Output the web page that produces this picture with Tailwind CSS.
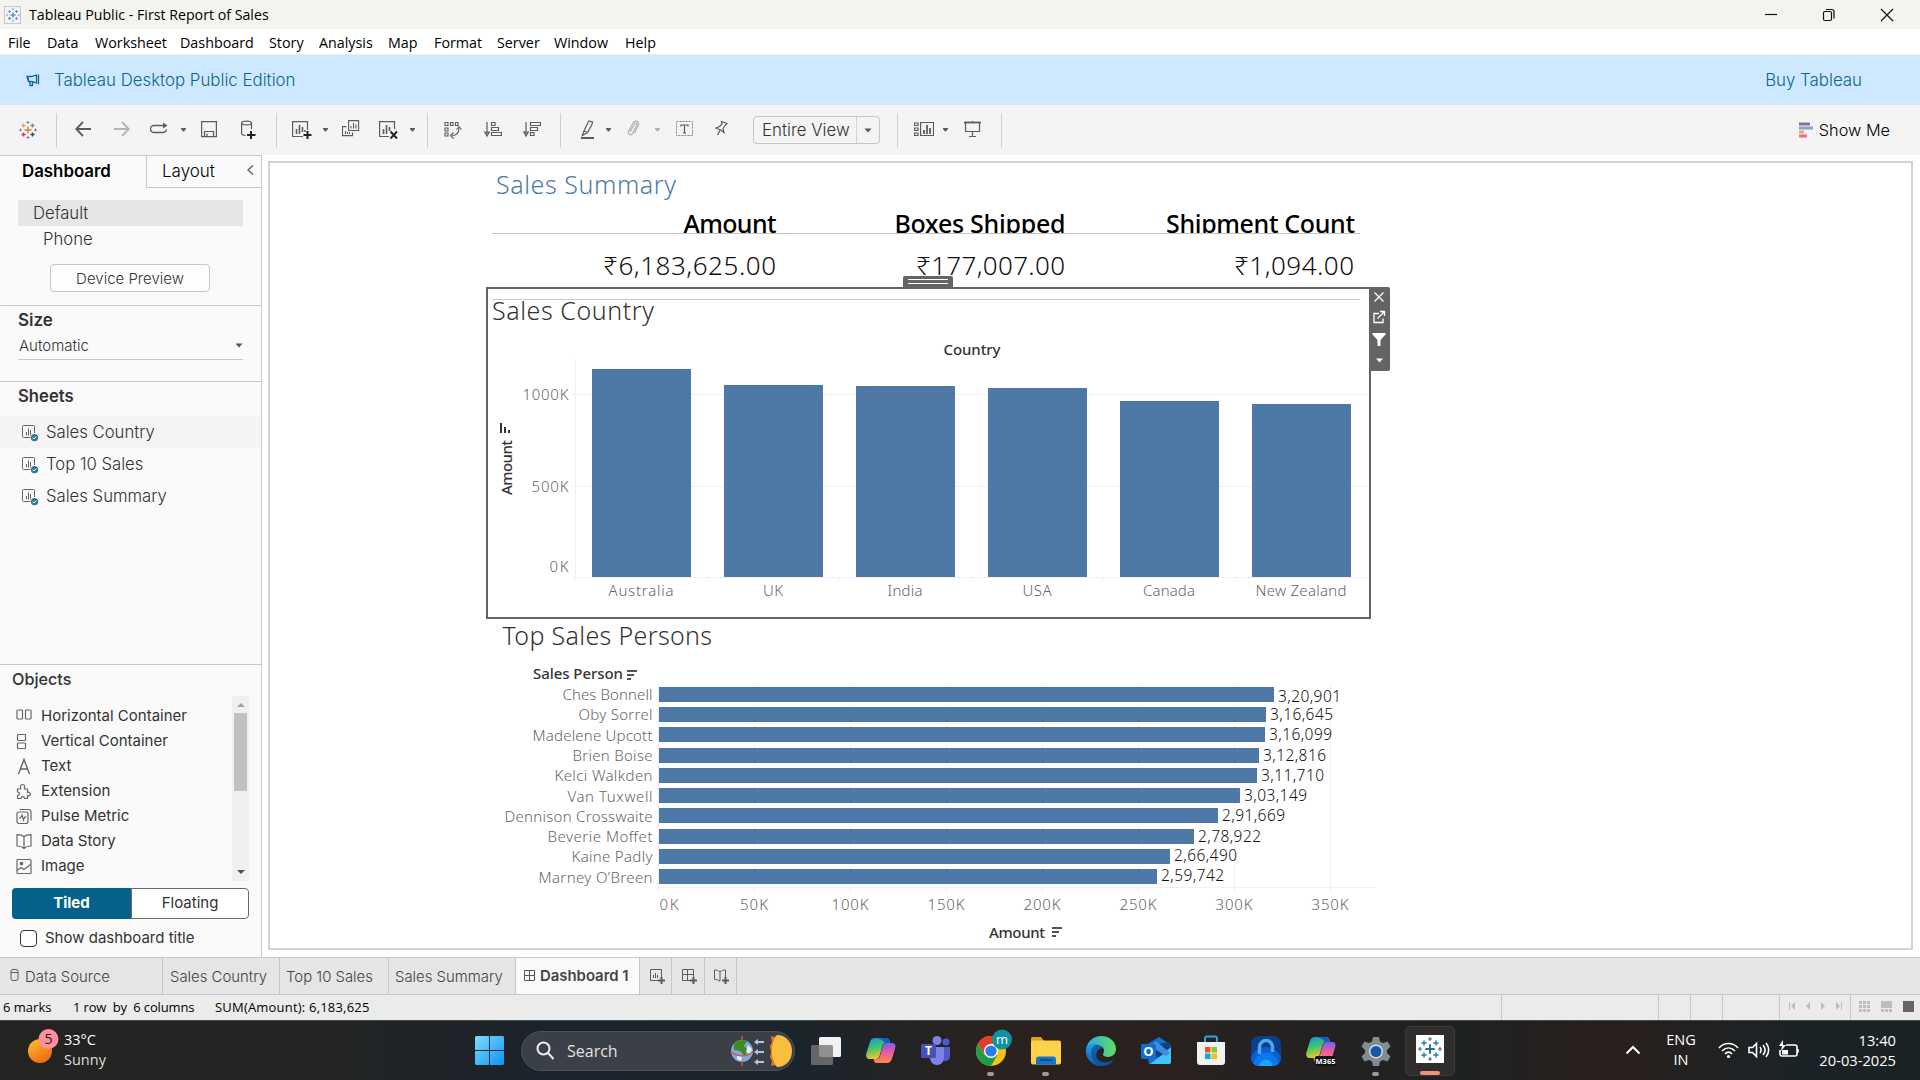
<!DOCTYPE html>
<html lang="en">
<head>
<meta charset="utf-8">
<title>Tableau Public - First Report of Sales</title>
<script src="https://cdn.jsdelivr.net/npm/@tailwindcss/browser@4"></script>
</head>
<body class="w-[1920px] h-[1080px] overflow-hidden flex flex-col bg-white font-['Inter',sans-serif] text-[#333]">

<svg class="hidden">
  <defs>
    <symbol id="caret" viewBox="0 0 7 20"><path d="M1 8h5v1l-2 2.500h-1l-2-2.500z" fill="currentColor"/></symbol>
    <symbol id="sheet" viewBox="0 0 17 17"><g fill="none" stroke="#666"><path d="M8.500 12.500H1.500a1 1 0 0 1-1-1v-10a1 1 0 0 1 1-1h10a1 1 0 0 1 1 1V8"/><path d="M4.500 7v3.500M6.500 3.500v7M8.500 5v5.500"/></g><circle cx="12.500" cy="12.700" r="3.600" fill="#2e7a9c"/><path d="m10.700 12.800 1.300 1.200 2.200-2.400" fill="none" stroke="#fff"/></symbol>
    <symbol id="flower" viewBox="0 0 18 18"><path d="M9 5.500v7M5.500 9h7" stroke-width="1.400" stroke="var(--c1)"/><path d="M4.500 2.500v4M2.500 4.500h4" stroke="var(--c2)"/><path d="M13.500 2.500v4M11.500 4.500h4" stroke="var(--c3)"/><path d="M4.500 11.500v4M2.500 13.500h4" stroke="var(--c4)"/><path d="M13.500 11.500v4M11.500 13.500h4" stroke="var(--c5)"/><path d="M9 0v3M7.500 1.500h3M9 15v3M7.500 16.500h3M1.500 7.500v3M0 9h3M16.500 7.500v3M15 9h3" stroke="var(--c6)" stroke-width=".9"/></symbol>
  </defs>
</svg>

<header class="h-[29px] flex items-center bg-[#f3f3ef] font-['Open_Sans',sans-serif] text-[14.200px] text-black">
  <div class="ml-1 w-[17px] h-[18px] bg-[#f0f4f7] border border-[#c8c8c8] flex items-center justify-center"><svg class="size-[14px] [--c1:#3b7ea8] [--c2:#6aa3c5] [--c3:#5794ba] [--c4:#5794ba] [--c5:#6aa3c5] [--c6:#7fb0cc]" stroke-width="1.300"><use href="#flower"/></svg></div>
  <span class="ml-2 leading-[29px]">Tableau Public - First Report of Sales</span>
  <svg class="ml-auto mr-[26px]" width="130" height="14" viewBox="0 0 130 14" fill="none" stroke="#111" stroke-width="1.200"><path d="M1 6.500h12"/><rect x="59.500" y="3.500" width="8" height="9" rx="1.500"/><path d="M62 1.500h6a2 2 0 0 1 2 2v7"/><path d="m117 1 12 12M129 1l-12 12"/></svg>
</header>

<nav class="h-[26px] shrink-0 flex items-center bg-white border-b border-[#ececec] font-['Open_Sans',sans-serif] text-[14.300px] leading-[26px] text-black pl-2 pt-0.5 whitespace-nowrap">
  <span class="w-[39px]">File</span><span class="w-12">Data</span><span class="w-[85px]">Worksheet</span><span class="w-[89px]">Dashboard</span><span class="w-[50px]">Story</span><span class="w-[69px]">Analysis</span><span class="w-[46px]">Map</span><span class="w-[63px]">Format</span><span class="w-[57px]">Server</span><span class="w-[71px]">Window</span><span>Help</span>
</nav>

<section class="h-[50px] shrink-0 flex items-center bg-[#cee8ff] text-[16.850px] font-light text-[#0b6792]">
  <svg class="ml-[26px]" width="14" height="14" viewBox="0 0 14 14" fill="none" stroke="currentColor" stroke-width="1.300"><path d="M1 3.500h4.500l5-1.500v8l-5-1.500h-3zM1 3.500l1.500 2.500-.5 2.500M4 9v3.500h2.500V9M12.500 1.500v9.500"/></svg>
  <span class="ml-[14px] pt-0.5">Tableau Desktop Public Edition</span>
  <span class="ml-auto mr-[58px] pt-0.5">Buy Tableau</span>
</section>

<section class="h-[50px] shrink-0 flex items-center bg-[#f4f4f4] text-[#5c5c5c]">
  <svg class="ml-[19px] size-[18px] [--c1:#e8762c] [--c2:#f0a04b] [--c3:#6c8fa8] [--c4:#c8344a] [--c5:#1f447e] [--c6:#5f7fa5]" stroke-width="1.300"><use href="#flower"/></svg>
  <div class="ml-[19px] w-px h-[35px] bg-[#cfcfcf]"></div>
  <svg class="ml-[18px]" width="16" height="20" viewBox="0 0 16 20" fill="none" stroke="currentColor" stroke-width="1.800"><path d="M16 9H1.500M8 2 1.200 9 8 16"/></svg>
  <svg class="ml-[23px]" width="16" height="20" viewBox="0 0 16 20" fill="none" stroke="#b4b4b4" stroke-width="1.800"><path d="M0 9h14.500M8 2l6.800 7L8 16"/></svg>
  <svg class="ml-5" width="18" height="20" viewBox="0 0 18 20" fill="none" stroke="currentColor" stroke-width="1.300"><path d="M4 5.500h11.500M4 5.500a3.500 3.500 0 0 0 0 7h9a3.500 3.500 0 0 0 3.500-3"/><path d="m13 2.500 4.500 3-4.500 3z" fill="currentColor" stroke="none"/></svg>
  <svg class="ml-3" width="7" height="20"><use href="#caret"/></svg>
  <svg class="ml-[14px]" width="16" height="20" viewBox="0 0 16 20" fill="none" stroke="currentColor" stroke-width="1.200"><path d="M.6 1.600h14.800v15H.6zM3.500 16.500v-5h9v5M6 13.500v3"/></svg>
  <svg class="ml-6" width="15" height="20" viewBox="0 0 15 20" fill="none" stroke="currentColor" stroke-width="1.200"><path d="M.6 3v10.500c0 1 1.500 1.700 4 2M10.500 3v6"/><ellipse cx="5.500" cy="3" rx="5" ry="1.900"/><path d="M10 11v8M6 15h8.500" stroke="#222" stroke-width="2"/></svg>
  <div class="ml-5 w-px h-[35px] bg-[#cfcfcf]"></div>
  <svg class="ml-[15px]" width="20" height="20" viewBox="0 0 20 20" fill="none" stroke="currentColor" stroke-width="1.200"><path d="M11 16.500H.6V1.600h14.900V10"/><path d="M4.500 9v5M7.500 5v9M10.500 7v5M13 10v2" stroke-width="1.600"/><path d="M15.500 11v8M11.500 15h8" stroke="#222" stroke-width="2"/></svg>
  <svg class="ml-[10px]" width="7" height="20"><use href="#caret"/></svg>
  <svg class="ml-[13px]" width="18" height="20" viewBox="0 0 18 20" fill="none" stroke="currentColor" stroke-width="1.100"><path d="M6.600.6h10v9.900h-10zM4.500 6.600h-4v9h10v-3"/><path d="M9 6v2.500M11.500 3v5.500M14 4.500v4M3.500 11v3M5.500 12v2M7.500 12v2"/></svg>
  <svg class="ml-[19px]" width="20" height="20" viewBox="0 0 20 20" fill="none" stroke="currentColor" stroke-width="1.200"><path d="M10 16.500H.6V1.600h14.900V9"/><path d="M4.500 9v5M7.500 5v9M10.500 7v4" stroke-width="1.600"/><path d="m11.500 11.500 6.500 7M18 11.500l-6.500 7" stroke="#222" stroke-width="1.900"/></svg>
  <svg class="ml-[10px]" width="7" height="20"><use href="#caret"/></svg>
  <div class="ml-[11px] w-px h-[35px] bg-[#cfcfcf]"></div>
  <svg class="ml-4" width="18" height="20" viewBox="0 0 18 20" fill="none" stroke="currentColor" stroke-width="1.100"><path d="M1 2.500h3v3H1zM6.500 2.500h2.500v3H6.500zM11.500 2.500h2.500v3h-2.500zM1 8h3v3H1zM1 13h3v3H1zM15 8c0 5-3 7.500-7 7.500"/><path d="m12.500 9.500 2.500-3 2.500 3M9.500 12.500l-3 3 3 3"/></svg>
  <svg class="ml-[22px]" width="18" height="20" viewBox="0 0 18 20" fill="none" stroke="currentColor" stroke-width="1.200"><path d="M3 2v12M.7 12 3 16l2.300-4z"/><path d="M7.500 2.500h3.500v3H7.500zM7.500 7.500h7v3h-7zM7.500 12.500h10v3h-10z"/></svg>
  <svg class="ml-[21px]" width="18" height="20" viewBox="0 0 18 20" fill="none" stroke="currentColor" stroke-width="1.200"><path d="M3 2v12M.7 12 3 16l2.300-4z"/><path d="M7.500 2.500h10v3h-10zM7.500 7.500h7v3h-7zM7.500 12.500h3.500v3H7.500z"/></svg>
  <div class="ml-[19px] w-px h-[35px] bg-[#cfcfcf]"></div>
  <svg class="ml-5" width="14" height="20" viewBox="0 0 14 20" fill="none" stroke="currentColor" stroke-width="1.200"><path d="M7 2.500 8 1l3.500 1-.5 2.500-4.500 8-3.500-1.500zM3 11l-1.500 4.500 5-3"/><path d="M0 18h13" stroke-width="2"/></svg>
  <svg class="ml-[10px]" width="7" height="20"><use href="#caret"/></svg>
  <svg class="ml-[15px]" width="13" height="20" viewBox="0 0 13 20" fill="none" stroke="#b0b0b0" stroke-width="1.200"><path d="M3 12 7.500 4c1-1.800 3-.8 2.300 1L5.500 13.500c-1.500 2.500-5 1-4-2L6 3c2-3.500 7-1.500 5.500 2L7.500 13"/></svg>
  <svg class="ml-[14px] text-[#b0b0b0]" width="7" height="20"><use href="#caret"/></svg>
  <svg class="ml-[15px]" width="17" height="20" viewBox="0 0 17 20" fill="none" stroke="#888"><path d="M.5 1.500h16v14H.5z" stroke-dasharray="2 1"/><path d="M5 6.500v-1.500h7v1.500M8.500 5v8M7 13h3" stroke="#555" stroke-width="1.200"/></svg>
  <svg class="ml-[22px]" width="13" height="20" viewBox="0 0 13 20" fill="none" stroke="currentColor" stroke-width="1.200"><path d="m6.500 1.500 5.500 2-1.500 1.500L8 8.500l1 4L5.500 10 1 8l3.500-1.500L7 4zM5 10l-2.500 5"/></svg>
  <div class="ml-[25px] w-[127px] h-7 rounded-sm border border-[#c6c6c6] flex items-center text-[#333] text-[16.850px] font-light">
    <span class="w-[103px] pl-2 border-r border-[#d4d4d4] leading-[26px]">Entire View</span>
    <svg class="ml-[7px]" width="8" height="5" viewBox="0 0 8 5"><path d="M.5.500h7L4 4.500z" fill="#555"/></svg>
  </div>
  <div class="ml-[17px] w-px h-[35px] bg-[#cfcfcf]"></div>
  <svg class="ml-4" width="20" height="20" viewBox="0 0 20 20" fill="none" stroke="currentColor" stroke-width="1.200"><path d="M.6 3h3.400v2.500H.6zM.6 8h3.400v2.500H.6zM.6 13h3.400v2.500H.6zM6.600 2.500h12.900v13H6.600z"/><path d="M10 10v4M13 5v9M16 8v6" stroke-width="1.800"/></svg>
  <svg class="ml-2" width="7" height="20"><use href="#caret"/></svg>
  <svg class="ml-[15px]" width="17" height="20" viewBox="0 0 17 20" fill="none" stroke="currentColor" stroke-width="1.200"><path d="M0 2.500h17" stroke-width="1.800"/><path d="M1.500 3v8.500h14V3M8.500 1v1M8.500 11.500v4.500M5 16.500h7"/></svg>
  <div class="ml-5 w-px h-[35px] bg-[#cfcfcf]"></div>
  <svg class="ml-auto" width="14" height="16" viewBox="0 0 14 16"><path d="M0 .500h11v3H0z" fill="#8a6f98"/><path d="M0 4.500h14v3H0z" fill="#82a6cc"/><path d="M0 8.500h5v3H0z" fill="#f4a07c"/><path d="M0 12.500h8v3H0z" fill="#f26b7e"/></svg>
  <span class="ml-[6px] mr-[30px] text-[16.300px] font-light text-black">Show Me</span>
</section>

<main class="h-[802px] shrink-0 flex">
  <aside class="w-[262px] h-full border-r border-t border-[#c9c9c9] bg-[#fafafa] flex flex-col">
    <div class="h-8 flex shrink-0">
      <span class="w-[146px] pl-[22px] pt-[3px] text-[16.850px] leading-6 font-semibold text-black">Dashboard</span>
      <div class="flex-1 flex items-center border-l border-b border-[#c9c9c9] pl-[15px] pt-px text-[17px] font-light text-black"><span class="w-[85px]">Layout</span><svg class="-mt-1" width="7" height="10" viewBox="0 0 7 10" fill="none" stroke="#666" stroke-width="1.500"><path d="M6 .5 1 5l5 4.500"/></svg></div>
    </div>
    <div class="h-[118px] shrink-0 border-b border-[#c9c9c9] pt-3 pl-[18px] text-[16.700px] font-light">
      <div class="w-[225px] h-[26px] leading-[26px] pl-[15px] bg-[#e6e6e6]">Default</div>
      <div class="h-[26px] leading-[26px] pl-[25px]">Phone</div>
      <div class="ml-8 mt-3 w-40 h-7 rounded-sm border border-[#c6c6c6] bg-[#fdfdfd] text-center leading-[27px] text-[15px] font-[350]">Device Preview</div>
    </div>
    <div class="h-[76px] shrink-0 border-b border-[#c9c9c9] px-[18px] pt-[2px]">
      <div class="h-6 leading-6 text-[17px] font-semibold">Size</div>
      <div class="w-[225px] h-7 flex items-center justify-between border-b border-[#c9c9c9] text-[15px] font-[350] pl-px pt-0.5"><span>Automatic</span><svg class="-mt-[3px]" width="8" height="5" viewBox="0 0 8 5"><path d="M.5.500h7L4 4.500z" fill="#555"/></svg></div>
    </div>
    <div class="h-[283px] shrink-0 border-b border-[#c9c9c9] pt-[2px] text-[16.700px]">
      <div class="h-8 pl-[18px] leading-6 font-semibold">Sheets</div>
      <div class="h-8 pl-[22px] flex items-center bg-[#f4f4f4] font-light"><svg class="w-[17px] h-[17px] mt-0.5"><use href="#sheet"/></svg><span class="ml-[7px] mt-px">Sales Country</span></div>
      <div class="h-8 pl-[22px] flex items-center font-light"><svg class="w-[17px] h-[17px] mt-0.5"><use href="#sheet"/></svg><span class="ml-[7px] mt-px">Top 10 Sales</span></div>
      <div class="h-8 pl-[22px] flex items-center font-light"><svg class="w-[17px] h-[17px] mt-0.5"><use href="#sheet"/></svg><span class="ml-[7px] mt-px">Sales Summary</span></div>
    </div>
    <div class="pl-3 pt-[2px] h-[31px] shrink-0 leading-6 text-[16.200px] font-medium">Objects</div>
    <div class="h-[184px] shrink-0 ml-4 mr-3 flex justify-between">
      <ul class="pt-[7px] text-[15px] font-[370]">
        <li class="h-[25px] flex items-center gap-[9px]"><svg width="16" height="16" viewBox="0 0 16 16" fill="none" stroke="#666" stroke-width="1.200"><rect x="1" y="2" width="5.500" height="9" rx=".8"/><rect x="9.500" y="2" width="5.500" height="9" rx=".8"/></svg><span class="mt-0.5">Horizontal Container</span></li>
        <li class="h-[25px] flex items-center gap-[9px]"><svg width="16" height="16" viewBox="0 0 16 16" fill="none" stroke="#666" stroke-width="1.200"><rect x="1.500" y="1.500" width="8" height="6" rx=".8"/><rect x="1.500" y="10" width="8" height="5.500" rx=".8"/></svg><span class="mt-0.5">Vertical Container</span></li>
        <li class="h-[25px] flex items-center gap-[9px]"><svg width="16" height="16" viewBox="0 0 16 16" fill="none" stroke="#666" stroke-width="1.400"><path d="m2.500 16 5.500-14.500L13.500 16M4.500 11h7"/></svg><span class="mt-0.5">Text</span></li>
        <li class="h-[25px] flex items-center gap-[9px]"><svg width="16" height="16" viewBox="0 0 16 16" fill="none" stroke="#666" stroke-width="1.200"><path d="M1.500 6h3V3.500a2 2 0 0 1 4 0V6h3v3.500a1.800 1.800 0 1 1 0 3v3h-3c0-2.500-3.500-2.500-3.500 0H1.500v-3c2.500 0 2.500-3.500 0-3.500z"/></svg><span class="mt-0.5">Extension</span></li>
        <li class="h-[25px] flex items-center gap-[9px]"><svg width="16" height="16" viewBox="0 0 16 16" fill="none" stroke="#666" stroke-width="1.200"><rect x="1" y="4" width="11" height="11.500" rx="2"/><path d="M3.500 1.500h9a2.500 2.500 0 0 1 2.500 2.500v8.500M3 10h1.500l1.500-3 1.500 5 1.200-3h1.800"/></svg><span class="mt-0.5">Pulse Metric</span></li>
        <li class="h-[25px] flex items-center gap-[9px]"><svg width="16" height="16" viewBox="0 0 16 16" fill="none" stroke="#666" stroke-width="1.200"><path d="M8 3.500C6 2 4 1.700 1 1.700V13c3 0 5 .5 7 2.500 2-2 4-2.500 7-2.500V1.700c-3 0-5 .3-7 1.800zv12"/></svg><span class="mt-0.5">Data Story</span></li>
        <li class="h-[25px] flex items-center gap-[9px]"><svg width="16" height="16" viewBox="0 0 16 16" fill="none" stroke="#666" stroke-width="1.200"><rect x="1" y="1.500" width="14" height="14" rx="1"/><circle cx="5.500" cy="5.500" r="1.200" fill="#666"/><path d="m1 12.500 4-3 3 2 6.500-5"/></svg><span class="mt-0.5">Image</span></li>
      </ul>
      <div class="w-[17px] h-[185px] bg-[#f0f0f0] flex flex-col items-center pt-[7px]">
        <svg width="8" height="4" viewBox="0 0 8 4"><path d="M0 4h8L4 0z" fill="#a3a3a3"/></svg>
        <div class="mt-[6px] w-[13px] h-[78px] bg-[#c1c1c1]"></div>
        <svg class="mt-[79px]" width="8" height="4" viewBox="0 0 8 4"><path d="M0 0h8L4 4z" fill="#505050"/></svg>
      </div>
    </div>
    <div class="mt-2 ml-3 w-[237px] h-[31px] shrink-0 flex text-center leading-[28px] text-[15px]">
      <div class="w-[119px] bg-[#06628a] rounded-l-sm text-white font-bold leading-[30px]">Tiled</div>
      <div class="flex-1 border border-[#6a6a6a] bg-white rounded-r-sm font-[370]">Floating</div>
    </div>
    <label class="mt-[9px] ml-5 flex items-center text-[15px] h-[21px] font-[370]"><span class="size-[17px] border-[1.500px] border-[#333] rounded-sm bg-white"></span><span class="ml-2">Show dashboard title</span></label>
  </aside>

  <section class="flex-1 pl-[6px] pr-[7px] pt-[6px] pb-[7px]">
    <div class="h-full border-2 border-[#cbd6df] bg-white pl-[216px]">
      <svg class="block font-['Noto_Sans',sans-serif]" width="905" height="124" viewBox="486 163 905 124" font-size="26.500" fill="#222">
        <defs><clipPath id="head"><path d="M486 200h905v33.500H486z"/></clipPath></defs>
        <text x="496" y="194" textLength="180" font-size="25" font-weight="300" fill="#4e79a7">Sales Summary</text>
        <g clip-path="url(#head)" font-size="25" font-weight="480" fill="#000" text-anchor="end">
          <text x="776.500" y="233" textLength="93">Amount</text><text x="1065.500" y="233" textLength="171">Boxes Shipped</text><text x="1355" y="233" textLength="189">Shipment Count</text>
        </g>
        <path d="M492 233.500h868" stroke="#c4c4c4"/>
        <g font-weight="300" text-anchor="end" font-size="26" fill="#111"><text x="776" y="275" textLength="173">₹6,183,625.00</text><text x="1065" y="275" textLength="149">₹177,007.00</text><text x="1354" y="275" textLength="120">₹1,094.00</text></g>
      </svg>

      <svg class="block overflow-visible font-['Noto_Sans',sans-serif]" width="905" height="331" viewBox="486 287 905 331" font-size="15" font-weight="300">
        <path d="M903 288v-10a2 2 0 0 1 2-2h46a2 2 0 0 1 2 2v10z" fill="#646464"/><path d="M908 279.500h40M908 283.500h40" stroke="#fff" stroke-width="1.200"/>
        <path d="M492 299.500h868" stroke="#c9c9c9"/>
        <text x="492" y="320" textLength="162" font-size="25" fill="#333">Sales Country</text>
        <text x="972" y="355" textLength="57" text-anchor="middle" font-weight="460" fill="#333">Country</text>
        <path d="M575.500 359v222M572 394.500h796M572 486.500h796M572 577.500h797M707.500 577v4M839.500 577v4M971.500 577v4M1103.500 577v4M1235.500 577v4" stroke="#f0f0f0" fill="none"/>
        <g id="columns" fill="#4e79a7"></g>
        <g fill="#666" font-weight="300">
          <g text-anchor="end"><text x="568.500" y="400" textLength="46">1000K</text><text x="568.500" y="492" textLength="37">500K</text><text x="568.500" y="572" textLength="19">0K</text></g>
          <g text-anchor="middle"><text x="641" y="596" textLength="65">Australia</text><text x="773" y="596" textLength="20">UK</text><text x="905" y="596" textLength="35">India</text><text x="1037" y="596" textLength="29">USA</text><text x="1169" y="596" textLength="52">Canada</text><text x="1301" y="596" textLength="91">New Zealand</text></g>
        </g>
        <text transform="translate(512 495) rotate(-90)" textLength="55" font-weight="460" fill="#333">Amount</text>
        <path d="M500 423h2v10h-2zM504 427h2v6h-2zM508 430h2v3h-2z" fill="#333"/>
        <rect x="487" y="288" width="883" height="330" fill="none" stroke="#646464" stroke-width="2"/>
        <path d="M1370 287h18a2 2 0 0 1 2 2v80a2 2 0 0 1-2 2h-18z" fill="#646464"/>
        <g fill="none" stroke="#fff" stroke-width="1.300"><path d="m1374.500 292.500 9 9M1383.500 292.500l-9 9M1379 313.500h-5v9h9v-4M1377.500 318.500l6.500-6.500M1380 311.500h4.500v4.500"/></g>
        <path d="M1372.500 333h13v1.500l-5 5.500v6h-3v-6l-5-5.500zM1376 358.500h7l-3.500 4z" fill="#fff"/>
      </svg>

      <svg class="block font-['Noto_Sans',sans-serif]" width="905" height="330" viewBox="486 618 905 330" font-size="15" font-weight="300">
        <text x="502.500" y="645" textLength="209.500" font-size="25" fill="#333">Top Sales Persons</text>
        <text x="533" y="679" textLength="90" font-weight="460" fill="#333">Sales Person</text>
        <path d="M627 670h10v2h-10zM627 674h7v2h-7zM627 678h4v2h-4zM1052 927h10v2h-10zM1052 931h7v2h-7zM1052 935h4v2h-4z" fill="#555"/>
        <path d="M658.500 684v208M754.500 684v208M850.500 684v208M946.500 684v208M1042.500 684v208M1138.500 684v208M1234.500 684v208M1330.500 684v208M658 887.500h718" stroke="#f0f0f0" fill="none"/>
        <g id="people"></g>
        <g fill="#666" text-anchor="middle"><text x="669" y="910" textLength="19">0K</text><text x="754" y="910" textLength="28">50K</text><text x="850" y="910" textLength="37">100K</text><text x="946" y="910" textLength="37">150K</text><text x="1042" y="910" textLength="37">200K</text><text x="1138" y="910" textLength="37">250K</text><text x="1234" y="910" textLength="37">300K</text><text x="1330" y="910" textLength="37">350K</text></g>
        <text x="989" y="938" textLength="56" font-weight="460" fill="#333">Amount</text>
      </svg>
    </div>
  </section>
</main>

<section class="h-[38px] shrink-0 flex bg-[#e5e5e5] border-y border-[#c8c8c8] text-[14.900px] leading-[38px] font-light text-[#444] whitespace-nowrap">
  <div class="w-[163px] border-r border-[#c8c8c8] flex items-center pl-[10px]"><svg class="-mt-0.5" width="10" height="12" viewBox="0 0 10 12" fill="none" stroke="#5c5c5c"><rect x="1" y=".5" width="7" height="11" rx="2"/><path d="M1 3.500h7"/></svg><span class="ml-[5px] pt-0.5">Data Source</span></div>
  <div class="w-[117px] border-r border-[#c8c8c8] pl-[7px]">Sales Country</div>
  <div class="w-[109px] border-r border-[#c8c8c8] pl-[6px]">Top 10 Sales</div>
  <div class="w-[127px] border-r border-[#c8c8c8] pl-[6px]">Sales Summary</div>
  <div class="w-[124px] border-r border-[#c8c8c8] pl-2 bg-[#fafafa] flex items-center font-semibold"><svg class="-mt-0.5" width="11" height="11" viewBox="0 0 11 11" fill="none" stroke="#555"><path d="M.5.500h10v10H.5zM5.500.500v10M.5 5.500h10"/></svg><span class="ml-[5px]">Dashboard 1</span></div>
  <div class="w-8 border-r border-[#c8c8c8] pl-[10px] pt-px flex items-center"><svg width="16" height="16" viewBox="0 0 16 16" fill="none" stroke="#5c5c5c"><path d="M8 11.500H.500v-11h11V8M3.500 6v3M5.500 4v5M7.500 6v3"/><path d="M11.500 8v7M8 11.500h7" stroke-width="2"/></svg></div>
  <div class="w-[33px] border-r border-[#c8c8c8] pl-[10px] pt-px flex items-center"><svg width="16" height="16" viewBox="0 0 16 16" fill="none" stroke="#5c5c5c"><path d="M8 11.500H.500v-11h11V8M5.500.500v11M.5 5.500h11"/><path d="M11.500 8v7M8 11.500h7" stroke-width="2"/></svg></div>
  <div class="w-8 border-r border-[#c8c8c8] pl-[9px] pt-px flex items-center"><svg width="16" height="16" viewBox="0 0 16 16" fill="none" stroke="#5c5c5c"><path d="M6 3C4.500 1.500 3 1 .5 1v9.500c2.500 0 4 .5 5.500 2M6 3c1.500-1.500 3-2 5.500-2v7M6 3v9"/><path d="M11.500 8v7M8 11.500h7" stroke-width="2"/></svg></div>
</section>

<footer class="h-[25px] shrink-0 flex bg-[#ebebeb] font-['Open_Sans',sans-serif] text-[13px] leading-[25px] text-black whitespace-nowrap">
  <span class="ml-[3px] w-[70px]">6 marks</span><span class="w-[142px] whitespace-pre tracking-[-0.15px]">1 row  by  6 columns</span><span class="tracking-[0.2px]">SUM(Amount): 6,183,625</span>
  <div class="ml-auto flex">
    <div class="w-[157px] border-l border-[#c8c8c8]"></div><div class="w-8 border-l border-[#c8c8c8]"></div><div class="w-8 border-l border-[#c8c8c8]"></div><div class="w-[57px] border-l border-[#c8c8c8]"></div>
    <div class="w-[71px] border-l border-[#c8c8c8] pl-2 pt-[6px]"><svg width="56" height="10" viewBox="0 0 56 10" fill="#bdbdbd"><path d="M1 1h1v8H1zM7 1v8L3 5zM22 1v8l-4-4zM33 1v8l4-4zM48 1v8l4-4zM53 1h1v8h-1z"/></svg></div>
    <div class="w-[70px] border-l border-[#c8c8c8] pl-2 pt-[6px]"><svg width="56" height="11" viewBox="0 0 56 11" fill="#bdbdbd"><path d="M0 0h3v3H0zM4 0h3v3H4zM8 0h3v3H8zM0 4h3v3H0zM4 4h3v3H4zM8 4h3v3H8zM0 8h3v3H0zM4 8h3v3H4zM8 8h3v3H8zM22 0h11v7H22zM22 8h3v3h-3zM26 8h3v3h-3zM30 8h3v3h-3z"/><path d="M44 0h11v11H44z" fill="#666"/></svg></div>
  </div>
</footer>

<footer class="h-[60px] shrink-0 flex items-center border-t border-[#44494a] bg-[linear-gradient(90deg,#242321_0%,#232423_17%,#1b242c_28%,#1c242b_42%,#2a221e_52%,#292120_60%,#1f2222_76%,#281f1c_84%,#1c2326_93%,#1b2225_100%)] font-['Open_Sans',sans-serif] text-[14.500px] leading-5 text-white">
  <svg class="ml-[26px] -mt-[10px]" width="34" height="36" viewBox="26 1027 34 36"><defs><linearGradient id="sun" x2=".6" y2="1"><stop stop-color="#f8c62f"/><stop offset="1" stop-color="#ef6a12"/></linearGradient></defs><circle cx="40" cy="1050" r="12" fill="url(#sun)"/><circle cx="48.500" cy="1038" r="10" fill="#ff8f9b"/><text x="48.500" y="1043" text-anchor="middle" font-size="14" fill="#222">5</text></svg>
  <div class="ml-1 -mt-0.5 w-[411px]"><div>33°C</div><div class="text-[#ddd]">Sunny</div></div>
  <svg width="29" height="29" viewBox="0 0 29 29"><defs><linearGradient id="win" x2="1" y2="1"><stop stop-color="#7fdcff"/><stop offset="1" stop-color="#0a93f5"/></linearGradient></defs><path d="M1 0h13v14H0V1zM15 0h13l1 1v13H15zM0 15h14v14H1l-1-1zM15 15h14v13l-1 1H15z" fill="url(#win)"/></svg>
  <div class="ml-[17px] w-[274px] h-10 rounded-full border border-[#4d5256] bg-[#3a4046] flex items-center text-[16px] text-[#e2e2e2]">
    <svg class="ml-[14px]" width="19" height="19" viewBox="0 0 19 19" fill="none" stroke="#eee" stroke-width="2"><circle cx="7.500" cy="7.500" r="6"/><path d="m12 12 5.500 6"/></svg>
    <span class="ml-3 w-[163px]">Search</span>
    <svg width="64" height="36" viewBox="0 0 64 36"><circle cx="12" cy="18" r="11" fill="#7fa9de"/><path d="M4 11c4-5 9-5 13-3l-3 5 4 4-3 6-5-5-6-1z" fill="#3f8a22"/><path d="M7 22l5 2-1 4-4-2zM18 12l4 4-2 5-4-2z" fill="#e4eef7"/><path d="M12 3v5M12 28v5M1 19c6 5 16 5 22 0" stroke="#d9563c" stroke-width="1.400" fill="none"/><g fill="#aec6e6"><path d="M24 9l4-3v2h6v2h-6v2zM24 19l4-3v2h6v2h-6v2zM24 29l4-3v2h6v2h-6v2z"/></g><path d="m41 3 3 1 4-2 1 32-5-2-3 1 1-5-2-4 1-5-1-6 2-4z" fill="#e8781c"/><path d="M47 2c9 0 15 7 15 16s-6 16-15 16c-7-8-7-24 0-32z" fill="#f9be3c"/></svg>
  </div>

  <div class="ml-[3px] flex h-full items-center">
    <div class="w-[55px] flex justify-center"><svg width="32" height="32" viewBox="0 0 32 32"><rect x="9" y="2" width="22" height="20" rx="1.500" fill="#f2f2f2"/><rect x="1" y="10" width="22" height="20" rx="1.500" fill="#777" fill-opacity=".8"/></svg></div>
    <div class="w-[55px] flex justify-center"><svg width="32" height="32" viewBox="0 0 32 32"><defs><linearGradient id="cpA" x2=".3" y2="1"><stop stop-color="#1b8df0"/><stop offset=".5" stop-color="#3ac66b"/><stop offset="1" stop-color="#f4c52c"/></linearGradient><linearGradient id="cpB" x2="0" y2="1"><stop stop-color="#7a5cf5"/><stop offset=".5" stop-color="#ee5c9c"/><stop offset="1" stop-color="#fb8b4a"/></linearGradient></defs><path d="M10 3h11c2 0 3 1 3.500 3l.5 2h-4c-2 0-3 1-3.500 3l-3 10c-.6 2-1.500 3-4 3H5c-3 0-4.500-2-3.500-6L5 7c1-3 2.500-4 5-4z" fill="url(#cpA)"/><path d="M22 28H12c-2 0-3-1-3.500-4h3c2 0 3-1 3.500-3l3-10c.6-2 1.500-3 4-3h5c3 0 4 2 3.200 5l-3 10c-1 3.500-2.700 5-5.200 5z" fill="url(#cpB)"/><path d="M10 3h11c2 0 3 1 4 5h-5c-1.500-2-5-5-10-5z" fill="#1560c8"/></svg></div>
    <div class="w-[55px] flex justify-center"><svg width="32" height="32" viewBox="0 0 32 32"><circle cx="26" cy="7" r="3.500" fill="#5059c9"/><circle cx="17" cy="5.500" r="4.500" fill="#7b83eb"/><path d="M21 12h9v9c0 3-2 5-5 5h-4z" fill="#5059c9"/><path d="M10 12h14v10c0 5-3 8-7 8s-7-3-7-8z" fill="#7b83eb"/><rect x="1" y="9" width="15" height="14" rx="1.500" fill="#4650b8"/><text x="8.500" y="20" text-anchor="middle" font-size="12" font-weight="700" fill="#fff">T</text></svg></div>
    <div class="w-[55px] flex justify-center relative"><svg class="overflow-visible" width="32" height="32" viewBox="0 0 32 32"><circle cx="16" cy="16" r="15" fill="#fbc116"/><path d="M3 8.500A15 15 0 0 1 29 8.500H16l-6.500 11z" fill="#e33b2e"/><path d="M16 31 22.500 20H9.500L3 8.500A15 15 0 0 0 16 31z" fill="#229b48"/><circle cx="16" cy="16" r="7" fill="#fff"/><circle cx="16" cy="16" r="5.600" fill="#2a7be8"/><circle cx="27" cy="4.500" r="10" fill="#0d93a3"/><text x="27" y="9" text-anchor="middle" font-size="13" fill="#fff">m</text></svg><i class="absolute bottom-[-9px] w-[7px] h-1 rounded-full bg-[#9b9b9b]"></i></div>
    <div class="w-[55px] flex justify-center relative"><svg width="32" height="32" viewBox="0 0 32 32"><path d="M1 3.500C1 3 1.500 2 3 2h8l3 4h12v6H1z" fill="#e0a21b"/><rect x="1" y="5.500" width="30" height="24" rx="2" fill="#fdd14a"/><path d="M6 29.500v-5c0-2 1-3 3-3h14c2 0 3 1 3 3v5z" fill="#1576c9"/><path d="M10 25h12" stroke="#0d4f96" stroke-width="2"/></svg><i class="absolute bottom-[-9px] w-[7px] h-1 rounded-full bg-[#9b9b9b]"></i></div>
    <div class="w-[55px] flex justify-center"><svg width="32" height="32" viewBox="0 0 32 32"><defs><linearGradient id="edA" x2="1"><stop stop-color="#2aa6e8"/><stop offset="1" stop-color="#5fe05c"/></linearGradient><linearGradient id="edB" x2="0" y2="1"><stop stop-color="#1f9fe6"/><stop offset="1" stop-color="#0f57b4"/></linearGradient></defs><path d="M1 15C2 6 9 1 16 1c9 0 15 6 15 13 0 5-4 8-8 8-3 0-5-1-5-2.500 0-1 1-1.500 1-4 0-3-3-5.500-8-5.500-4 0-8 2-10 5z" fill="url(#edA)"/><path d="M1 15c1-5 6-7 10-6 3 1 5 2.500 6 4-4 0-6 4-6 7 0 6 6 8 10 7.500 3 0 5-1.500 7-2.500-2 4-7 6-12 6C7 31 0 23 1 15z" fill="url(#edB)"/><path d="M11 9.500c-4 2-5 6-4.500 10 .6 5 4 10 9.500 11.500 5 0 10-2 12-6-5 3-12 3-15-1-3-3-2.500-9 4-11-1-2-3-3-6-3.500z" fill="#0e4e9f" fill-opacity=".75"/></svg></div>
    <div class="w-[55px] flex justify-center"><svg width="32" height="32" viewBox="0 0 32 32"><path d="M6 10 19 2l12 8v17c0 1-1 2-2 2H9z" fill="#1a6fc9"/><path d="m14 10 14-3 3 4v12l-17-1z" fill="#123f86"/><path d="M31 12v15c0 1-1 2-2 2H10l12-9z" fill="#41c3f5"/><path d="m10 11 6-5 14 12-4 3z" fill="#3c8fe0"/><rect x="1" y="9" width="15" height="15" rx="1.500" fill="#0f6fd0"/><text x="8.500" y="21" text-anchor="middle" font-size="13" font-weight="700" fill="#fff">O</text></svg></div>
    <div class="w-[55px] flex justify-center"><svg width="32" height="32" viewBox="0 0 32 32"><path d="M10 7V3.500C10 2 11 1.500 12 1.500h8c1 0 2 .5 2 2V7" fill="none" stroke="#27a5df" stroke-width="2"/><path d="M2 7h28v20c0 2-1 3-3 3H5c-2 0-3-1-3-3z" fill="#f1f1f1"/><path d="M10 12h5.500v5.500H10z" fill="#f1511b"/><path d="M16.500 12H22v5.500h-5.500z" fill="#80cc28"/><path d="M10 18.500h5.500V24H10z" fill="#00adef"/><path d="M16.500 18.500H22V24h-5.500z" fill="#fbbc09"/></svg></div>
    <div class="w-[55px] flex justify-center"><svg width="32" height="32" viewBox="0 0 32 32"><defs><clipPath id="rd"><rect x="1" y="1" width="30" height="30" rx="8"/></clipPath></defs><g clip-path="url(#rd)"><path d="M0 0h32v32H0z" fill="#0b3f8c"/><circle cx="16" cy="28" r="16" fill="#0a5fd0"/><path d="M9.500 19v-7a6.500 6.500 0 0 1 13 0v5" fill="none" stroke="#4ba7ee" stroke-width="3.500"/><circle cx="16" cy="30" r="12.500" fill="#0a78ee"/><circle cx="16" cy="31" r="6.500" fill="#1da7fb"/></g></svg></div>
    <div class="w-[55px] flex justify-center"><svg width="32" height="32" viewBox="0 0 32 32"><path d="M10 2h11c2 0 3 1 3.500 3l.5 2h-4c-2 0-3 1-3.500 3l-3 10c-.6 2-1.500 3-4 3H5c-3 0-4.500-2-3.500-6L5 6c1-3 2.500-4 5-4z" fill="url(#cpA)"/><path d="M22 27H12c-2 0-3-1-3.500-4h3c2 0 3-1 3.500-3l3-10c.6-2 1.500-3 4-3h5c3 0 4 2 3.200 5l-3 10c-1 3.500-2.700 5-5.200 5z" fill="url(#cpB)"/><path d="M10 2h11c2 0 3 1 4 5h-5c-1.500-2-5-5-10-5z" fill="#1560c8"/><rect x="10" y="21" width="21" height="10" rx="2" fill="#111"/><text x="20.500" y="29" text-anchor="middle" font-size="7.500" font-weight="700" fill="#fff">M365</text></svg></div>
    <div class="w-[55px] flex justify-center relative"><svg width="32" height="32" viewBox="0 0 32 32"><path d="m13 2 6 0 1 4.500 3 1.500 4.500-1.500 3 5-3.500 3.500v3l3.500 3.500-3 5-4.500-1.500-3 1.500-1 4.500h-6l-1-4.500-3-1.500-4.500 1.500-3-5L5 18v-3l-3.500-3.500 3-5L9 8l3-1.500z" fill="#858b92"/><circle cx="16" cy="16.500" r="7" fill="#d7dbdf"/><circle cx="16" cy="16.500" r="5.500" fill="#0f5aa6"/></svg><i class="absolute bottom-[-9px] w-[7px] h-1 rounded-full bg-[#9b9b9b]"></i></div>
    <div class="w-[50px] h-[50px] ml-[2px] rounded-[5px] border border-[#3b3b3b] bg-[#2f2e2d] flex justify-center items-center relative"><div class="size-7 bg-white flex items-center justify-center -mt-[3px]"><svg class="size-6 [--c1:#1f6e9c] [--c2:#2b7aa8] [--c3:#2b7aa8] [--c4:#2b7aa8] [--c5:#2b7aa8] [--c6:#2b7aa8]"><use href="#flower"/></svg></div><i class="absolute bottom-0 w-5 h-1 rounded-full bg-[#ea937d]"></i></div>
  </div>

  <div class="ml-auto mr-6 -mt-0.5 flex items-center">
    <svg width="16" height="10" viewBox="0 0 16 10" fill="none" stroke="#fff" stroke-width="2"><path d="m1.500 8.500 6.500-6.500 6.500 6.500"/></svg>
    <div class="ml-[23px] w-[34px] text-center"><div>ENG</div><div>IN</div></div>
    <svg class="ml-5" width="82" height="20" viewBox="0 0 82 20" fill="none" stroke="#fff" stroke-width="1.600"><path d="M1 8c5-6 14-6 19 0M4 11c4-4 9-4 13 0M7 14c2-2.500 5-2.500 7 0"/><circle cx="10.500" cy="16.500" r="1.600" fill="#fff" stroke="none"/><path d="M31 7.500h3.500l4-4v13l-4-4H31zM42 7c1.500 2 1.500 4 0 6M45 5c2.500 3 2.500 7 0 10M48 3c3.500 4 3.500 10 0 14"/><path d="M68 5h9a2 2 0 0 1 2 2v7a2 2 0 0 1-2 2H64a2 2 0 0 1-2-2v-4M80 9v3.500"/><path d="M64 10h6v4.500h-6zM65 0l-4 6h3l-1 5 5-6h-3z" fill="#fff" stroke="none"/></svg>
    <div class="ml-3 w-[84px] text-right text-[14.700px]"><div>13:40</div><div>20-03-2025</div></div>
  </div>
</footer>

<script>
  const NS = 'http://www.w3.org/2000/svg';
  const add = (parent, tag, attrs, text) => {
    const el = document.createElementNS(NS, tag);
    for (const k in attrs) el.setAttribute(k, attrs[k]);
    if (text) el.textContent = text;
    document.getElementById(parent).appendChild(el);
  };
  [369, 385, 386, 388, 401, 404].forEach((y, i) => add('columns', 'rect', { x: 592 + 132 * i, y, width: 99, height: 577 - y }));
  // name, label, bar top, bar end, name width, label baseline
  [
    ['Ches Bonnell', '3,20,901', 687, 1274, 90, 702], ['Oby Sorrel', '3,16,645', 707, 1266, 74, 720],
    ['Madelene Upcott', '3,16,099', 727, 1265, 120, 740], ['Brien Boise', '3,12,816', 748, 1259, 80, 761],
    ['Kelci Walkden', '3,11,710', 768, 1257, 98, 781], ['Van Tuxwell', '3,03,149', 788, 1240, 85, 801],
    ['Dennison Crosswaite', '2,91,669', 808, 1218, 148, 821], ['Beverie Moffet', '2,78,922', 829, 1194, 105, 842],
    ['Kaine Padly', '2,66,490', 849, 1170, 81, 861], ['Marney O’Breen', '2,59,742', 869, 1157, 114, 881]
  ].forEach(([name, value, y, end, w, base], i) => {
    add('people', 'rect', { x: 659, y, width: end - 659, height: 15, fill: '#4e79a7' });
    add('people', 'text', { x: 652.5, y: Math.round(700 + 20.3 * i), 'text-anchor': 'end', textLength: w, fill: '#666' }, name);
    add('people', 'text', { x: end + 4, y: base, textLength: 63, fill: '#111', 'font-size': 15.5 }, value);
  });
</script>
</body>
</html>
